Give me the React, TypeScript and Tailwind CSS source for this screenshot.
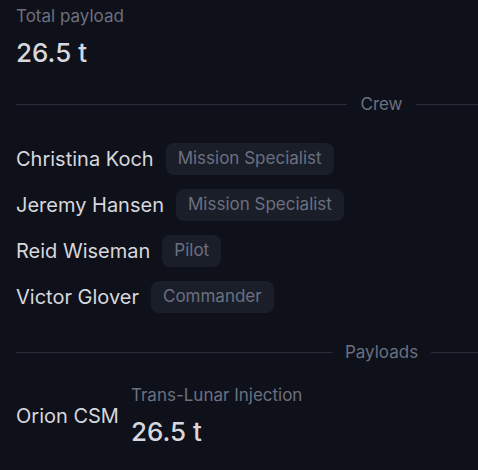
import React from "react";

const crew = [
  { name: "Christina Koch", role: "Mission Specialist" },
  { name: "Jeremy Hansen", role: "Mission Specialist" },
  { name: "Reid Wiseman", role: "Pilot" },
  { name: "Victor Glover", role: "Commander" },
];

function Divider({ label }: { label: string }) {
  return (
    <div className="flex items-center w-[731px] gap-[13px]">
      <div className="flex-1 h-px bg-[#2a2d3c]" />
      <span className="text-[17px] leading-6 text-[#6b7080]">{label}</span>
      <div className="flex-1 h-px bg-[#2a2d3c]" />
    </div>
  );
}

export default function App() {
  return (
    <div
      className="w-[478px] h-[470px] overflow-hidden bg-[#0f111a] px-4 pt-[6px]"
      style={{ fontFamily: "Inter, 'Noto Sans', sans-serif" }}
    >
      <div className="text-[17px] leading-5 text-[#6b7080]">Total payload</div>
      <div className="mt-[11px] text-[26px] leading-8 font-medium text-[#d6d8dd]">26.5 t</div>
      <div className="mt-[23px]">
        <Divider label="Crew" />
      </div>
      <div className="mt-[27px] flex flex-col gap-[14px]">
        {crew.map((c) => (
          <div key={c.name} className="flex items-center gap-3 h-8">
            <span className="text-[20px] leading-7 text-[#d6d8dd]">{c.name}</span>
            <span className="h-8 flex items-center px-3 rounded-lg bg-[#1a1e29] text-[17px] text-[#6b7080]">
              {c.role}
            </span>
          </div>
        ))}
      </div>
      <div className="mt-[27px]">
        <Divider label="Payloads" />
      </div>
      <div className="mt-[19px] flex items-center gap-3">
        <span className="text-[20px] leading-7 text-[#d6d8dd]">Orion CSM</span>
        <div className="flex flex-col">
          <span className="text-[17px] leading-6 text-[#6b7080]">Trans-Lunar Injection</span>
          <span className="mt-[9px] text-[26px] leading-8 font-medium text-[#d6d8dd]">26.5 t</span>
        </div>
      </div>
    </div>
  );
}
